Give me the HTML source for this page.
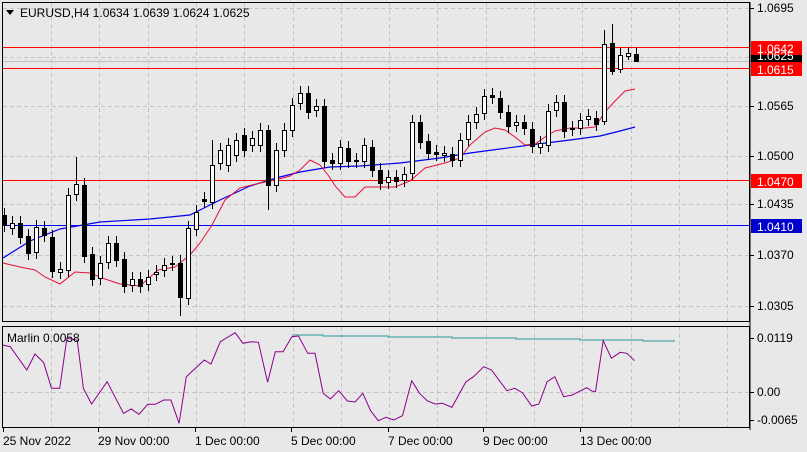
<!DOCTYPE html><html><head><meta charset="utf-8"><style>
html,body{margin:0;padding:0;background:#e8e8e8;width:807px;height:452px;overflow:hidden}
svg{display:block;font-family:"Liberation Sans",sans-serif}
</style></head><body>
<svg id="s" width="807" height="452" viewBox="0 0 807 452" xmlns="http://www.w3.org/2000/svg">
<rect width="807" height="452" fill="#e8e8e8"/>
<g id="grid" stroke="#c4c4c4" stroke-dasharray="4,3" stroke-width="1"></g>
<rect x="3" y="61" width="747" height="1" fill="#c0c0c0"/>
<rect x="3" y="47" width="747" height="1" fill="#ff0000"/>
<rect x="3" y="68" width="747" height="1" fill="#ff0000"/>
<rect x="3" y="180" width="747" height="1" fill="#ff0000"/>
<rect x="3" y="225" width="747" height="1" fill="#0000ff"/>
<polyline fill="none" stroke="#0000ee" stroke-width="1.2" points="3,258 30,241 60,229 100,222 150,219 190,215 220,200 250,186 280,177 300,172 330,167 360,166 400,163 440,158 470,153 500,149 530,145 570,140 600,136 620,131 635,127"/>
<polyline fill="none" stroke="#e8103a" stroke-width="1" points="3,263 20,267 35,270 45,277 60,284 75,272 90,273 105,279 120,284 140,286 158,270 175,267 190,255 200,243 212,225 225,200 240,188 260,183 275,180 290,176 300,170 310,160 320,165 328,175 336,187 345,197 355,197 365,187 378,187 395,187 410,181 425,168 445,163 460,158 470,145 485,132 495,128 505,130 515,137 525,145 535,144 545,137 555,131 570,128 585,128 595,127 605,112 615,101 625,91 635,89"/>
<g id="c"></g>
<rect x="2.5" y="2.5" width="747" height="319" fill="none" stroke="#000"/>
<line x1="3" y1="392.5" x2="750" y2="392.5" stroke="#c4c4c4" stroke-dasharray="4,3"/>
<polyline fill="none" stroke="#4fa8a8" stroke-width="1.2" points="292,335 323,335 323,336 388,336 388,337 452,337 452,338 516,338 516,339 580,339 580,340 643,340 643,341 675,341"/>
<polyline id="m" fill="none" stroke="#8b008b" stroke-width="1"/>
<rect x="2.5" y="326.5" width="747" height="101" fill="none" stroke="#000"/>
<line x1="750" y1="2" x2="750" y2="430" stroke="#000"/>
<g font-size="12" fill="#000" id="ax"></g>
<rect x="751" y="41" width="51" height="14" fill="#ff0000"/>
<rect x="751" y="55" width="51" height="7" fill="#000"/>
<rect x="751" y="62" width="51" height="14" fill="#ff0000"/>
<text x="757" y="60" font-size="12" fill="#fff">1.0625</text>
<text x="757" y="53" font-size="12" fill="#fff">1.0642</text>
<text x="757" y="74" font-size="12" fill="#fff">1.0615</text>
<rect x="751" y="174" width="51" height="14" fill="#ff0000"/>
<text x="757" y="186" font-size="12" fill="#fff">1.0470</text>
<rect x="751" y="219" width="51" height="14" fill="#0000cc"/>
<text x="757" y="231" font-size="12" fill="#fff">1.0410</text>
<path d="M6,10 L14,10 L10,15 Z" fill="#000"/>
<text x="20" y="17" font-size="12" fill="#000">EURUSD,H4  1.0634 1.0639 1.0624 1.0625</text>
<text x="7" y="342" font-size="12" fill="#000">Marlin 0.0058</text>
</svg>
<script>
var NS="http://www.w3.org/2000/svg";
function el(t,a,p){var e=document.createElementNS(NS,t);for(var k in a)e.setAttribute(k,a[k]);p.appendChild(e);return e;}
var g=document.getElementById('grid');
for(var i=0;i<15;i++){var x=Math.round(51+i*48.3)+0.5;el('line',{x1:x,y1:3,x2:x,y2:321},g);el('line',{x1:x,y1:327,x2:x,y2:427},g);}
[8,57,106,156,204,255,306].forEach(function(y){el('line',{x1:3,y1:y+0.5,x2:750,y2:y+0.5},g);});
var ax=document.getElementById('ax');
[[8,'1.0695'],[106,'1.0565'],[156,'1.0500'],[204,'1.0435'],[255,'1.0370'],[306,'1.0305'],[338,'0.0119'],[392,'0.00'],[420,'-0.0065']].forEach(function(a){
 el('line',{x1:750,y1:a[0]+0.5,x2:754,y2:a[0]+0.5,stroke:'#000'},ax);
 var t=el('text',{x:757,y:a[0]+4},ax);t.textContent=a[1];});
[[3,'25 Nov 2022'],[98,'29 Nov 00:00'],[195,'1 Dec 00:00'],[291,'5 Dec 00:00'],[388,'7 Dec 00:00'],[483,'9 Dec 00:00'],[580,'13 Dec 00:00']].forEach(function(a){
 var t=el('text',{x:a[0],y:445},ax);t.textContent=a[1];
 el('line',{x1:a[0]+0.5,y1:428,x2:a[0]+0.5,y2:432,stroke:'#000'},ax);});
var C=[[215,225,0],[223,228,1],[223,237,0],[236,253,0],[227,252,1],[228,235,0],[237,271,0],[269,272,1],[195,270,1],[184,194,1,157],[185,256,0],[254,279,0],[263,278,1],[243,262,1],[243,260,0],[259,286,0],[279,285,1],[279,286,0],[277,284,1],[272,274,1],[265,270,1],[263,264,1],[263,297,0,255,316],[228,298,1],[212,229,1],[199,201,0],[165,202,1,140],[150,163,1],[145,165,1],[140,155,1],[135,150,0],[138,145,1],[130,145,1],[130,185,0,125,210],[150,185,1],[130,150,1],[105,130,1],
[93,103,1],[93,112,0],[106,110,1],[106,161,0],[160,163,0],[147,163,1],[148,161,0],[160,161,0],[145,161,1],[147,170,0],[170,183,0],[177,182,1],[177,181,0],[174,180,1],[122,173,1],[122,142,0],[141,153,0],[152,154,0],[153,155,1],[154,160,0],[140,160,1],[122,139,1],[114,122,1],[96,113,1],[95,97,0],[98,112,0],[112,126,0],[122,125,1],[122,128,0],[129,146,0],[143,147,1],[111,145,1],[102,110,1],[102,131,0],[128,129,0],[120,128,1],[116,119,1],[118,124,0],[44,121,1,30,125],[43,71,0,24,75],[55,69,1,48,73],[53,56,1,47,60],[54,61,0,48,61]];
var cg=document.getElementById('c');
C.forEach(function(c,k){var x=Math.round(3.7+8*k)+0.5;var wt=c[3]||c[0]-7,wb=c[4]||c[1]+7;
 el('line',{x1:x,y1:wt,x2:x,y2:wb,stroke:'#000'},cg);
 var h=Math.max(1,c[1]-c[0]);
 el('rect',{x:x-2,y:c[0]+0.5,width:4,height:h,fill:c[2]?'#fff':'#000',stroke:'#000'},cg);});
var M=[[5,75],[20,80],[52,150],[68,102],[85,128],[100,205],[116,205],[130,55],[150,60],[162,205],[178,252],[208,185],[240,280],[255,267],[270,283],[287,253],[302,253],[318,240],[332,240],[348,310],[362,170],[397,120],[410,132],[428,65],[457,38],[472,70],[488,65],[502,67],[520,187],[535,95],[550,95],[567,50],[580,48],[598,100],[612,100],[628,220],[642,237],[658,212],[675,243],[690,246],[705,220],[720,272],[735,302],[750,292],[765,300],[782,287],[800,182],[815,220],[830,242],[845,252],[860,250],[878,262],[905,186],[920,170],[940,140],[955,150],[985,212],[1000,205],[1015,218],[1033,258],[1047,252],[1063,185],[1078,170],[1095,230],[1112,225],[1140,203],[1150,213],[1157,215],[1172,62],[1188,115],[1205,97],[1218,100],[1233,122]];
document.getElementById('m').setAttribute('points',M.map(function(p){return (p[0]/1.943).toFixed(1)+','+(320+p[1]/3).toFixed(1);}).join(' '));
</script>
</body></html>
